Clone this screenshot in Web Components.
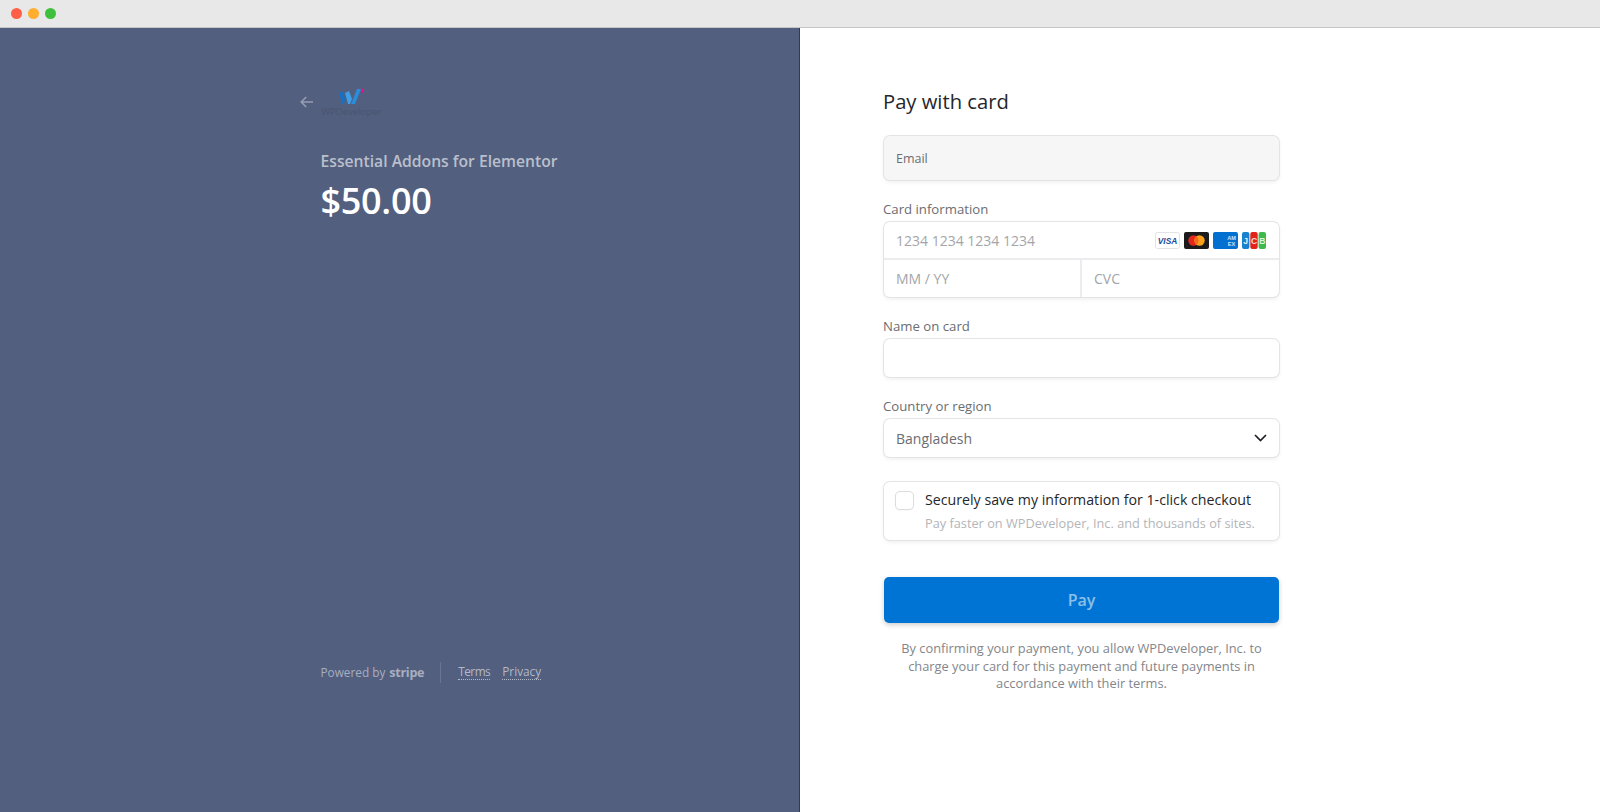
<!DOCTYPE html>
<html lang="en">
<head>
<meta charset="utf-8">
<title>Pay with card</title>
<style>
  html, body { margin: 0; height: 100%; }
  body { font-family: "Open Sans", "Noto Sans", "Liberation Sans", sans-serif; overflow: hidden; }
</style>
</head>
<body>
<checkout-window>
  <order-summary slot="left" name="Essential Addons for Elementor" price="$50.00"></order-summary>
  <pay-form slot="right"></pay-form>
</checkout-window>

<script>
// ventana con barra de titulo y dos columnas
class CheckoutWindow extends HTMLElement {
  constructor() {
    super();
    this.attachShadow({ mode: 'open' });
  }
  connectedCallback() {
    this.shadowRoot.innerHTML = `
    <style>
      :host { display: flex; flex-direction: column; height: 812px; background: #fff; }
      .bar { height: 28px; box-sizing: border-box; background: #e8e8e8; border-bottom: 1px solid #c4c5c9; display: flex; align-items: center; gap: 6px; padding: 0 0 0 11px; flex: none; }
      .dot { width: 11px; height: 11px; border-radius: 50%; }
      .split { flex: 1; display: grid; grid-template-columns: 800px 800px; min-height: 0; }
      .left { background: #525f7f; border-right: 1px solid #2f3a56; box-sizing: border-box; display: flex; min-height: 0; }
      .right { background: #fff; display: flex; }
    </style>
    <div class="bar">
      <span class="dot" style="background:#ff5f47"></span>
      <span class="dot" style="background:#ffae2e"></span>
      <span class="dot" style="background:#3fc03c"></span>
    </div>
    <div class="split">
      <div class="left"><slot name="left"></slot></div>
      <div class="right"><slot name="right"></slot></div>
    </div>`;
  }
}

class OrderSummary extends HTMLElement {
  constructor() {
    super();
    this.attachShadow({ mode: 'open' });
  }
  connectedCallback() {
    const name = this.getAttribute('name') ?? '';
    const price = this.getAttribute('price') ?? '';
    this.shadowRoot.innerHTML = `
    <style>
      :host { display: flex; flex-direction: column; flex: 1; box-sizing: border-box; padding: 57px 0 129px 300px; }
      .head { display: flex; align-items: center; gap: 8px; height: 33px; }
      .back { width: 13px; height: 12px; flex: none; }
      .logo { display: flex; flex-direction: column; align-items: center; width: 61px; }
      .logo svg { display: block; margin-bottom: 2px; }
      .logo span { font-size: 9.6px; line-height: 10px; color: #4a5470; white-space: nowrap; }
      .info { padding-left: 20.5px; margin-top: 33px; }
      .name { font-size: 15.7px; line-height: 20px; font-weight: 600; color: #babfcc; white-space: nowrap; }
      .price { font-size: 36px; line-height: 44px; font-weight: 600; color: #fff; margin-top: 8px; letter-spacing: -.3px; }
      .foot { margin-top: auto; padding-left: 20.5px; display: flex; align-items: center; height: 22px; font-size: 11.8px; color: #a8aebf; }
      .foot b { font-size: 12.6px; font-weight: 700; margin-left: 4px; letter-spacing: -.3px; color: #a8aebf; }
      .sep { width: 1px; height: 21px; background: #6a7592; margin: 0 17px 0 16px; }
      a { color: #b2b8c7; text-decoration: none; border-bottom: 1px dotted #b2b8c7; line-height: 15px; margin-right: 12px; }
      a.terms { letter-spacing: -.5px; }
    </style>
    <div class="head">
      <svg class="back" viewBox="0 0 13 12" fill="none" stroke="#979fb4" stroke-width="1.5"><path d="M13 6H1.2M6.2 1 1.2 6l5 5"/></svg>
      <div class="logo">
        <svg width="26" height="18" viewBox="0 0 26 18">
          <path d="M0 5h4l2 7-1 5H3z" fill="#1670c4"/>
          <path d="M6 6l4-2 3 8-2 5H9z" fill="#3f9ee6"/>
          <path d="M12 17L18 2h4l-6 15z" fill="#2b8cdc"/>
          <path d="M22.5 2L25 1l-.6 4-2.6 2z" fill="#e0148c"/>
        </svg>
        <span>WPDeveloper</span>
      </div>
    </div>
    <div class="info">
      <div class="name">${name}</div>
      <div class="price">${price}</div>
    </div>
    <div class="foot">
      <span>Powered by</span><b>stripe</b>
      <span class="sep"></span>
      <a class="terms">Terms</a><a>Privacy</a>
    </div>`;
  }
}

class FieldLabel extends HTMLElement {
  constructor() {
    super();
    this.attachShadow({ mode: 'open' });
  }
  connectedCallback() {
    this.shadowRoot.innerHTML = `
    <style>
      :host { display: block; font-size: 13.2px; line-height: 17px; color: #6b6d72; margin-bottom: 4px; }
    </style>
    <slot></slot>`;
  }
}

// caja de campo con el borde y la sombra de stripe
class FieldBox extends HTMLElement {
  constructor() {
    super();
    this.attachShadow({ mode: 'open' });
  }
  connectedCallback() {
    this.shadowRoot.innerHTML = `
    <style>
      :host { display: flex; align-items: center; box-sizing: border-box; height: var(--h, 38px); padding: 0 12px; background: var(--bg, #fff); color: var(--c, #6b6d72); border-radius: 6px; box-shadow: 0 0 0 1px #e4e4e6, 0 2px 4px rgba(0,0,0,.08); font-size: 14px; }
      ::slotted(*) { flex: none; }
    </style>
    <slot></slot>`;
  }
}

class CardBrands extends HTMLElement {
  constructor() {
    super();
    this.attachShadow({ mode: 'open' });
  }
  connectedCallback() {
    this.shadowRoot.innerHTML = `
    <style>
      :host { display: flex; gap: 4px; align-items: center; }
      svg { display: block; }
      text { font-family: "Liberation Sans", sans-serif; }
    </style>
    <svg width="25" height="17" viewBox="0 0 25 17">
      <rect x=".5" y=".5" width="24" height="16" rx="2" fill="#fff" stroke="#e3e3e6"/>
      <text x="12.5" y="11.8" text-anchor="middle" font-size="8.4" font-weight="700" font-style="italic" fill="#1a4a9c">VISA</text>
    </svg>
    <svg width="25" height="17" viewBox="0 0 25 17">
      <rect width="25" height="17" rx="2" fill="#1b1b1b"/>
      <circle cx="9.5" cy="8.5" r="5.2" fill="#e5261f"/>
      <circle cx="15.5" cy="8.5" r="5.2" fill="#f9a11b"/>
      <path d="M12.5 4.3a5.2 5.2 0 0 1 0 8.4 5.2 5.2 0 0 1 0-8.4z" fill="#f26b1d"/>
    </svg>
    <svg width="25" height="17" viewBox="0 0 25 17">
      <rect width="25" height="17" rx="2" fill="#0170d0"/>
      <text x="18.5" y="7.5" text-anchor="middle" font-size="5.6" font-weight="700" fill="#cfe4f7">AM</text>
      <text x="18.5" y="14" text-anchor="middle" font-size="5.6" font-weight="700" fill="#cfe4f7">EX</text>
    </svg>
    <svg width="24" height="17" viewBox="0 0 24 17">
      <rect x="0" y="0" width="7.4" height="17" rx="2" fill="#1782d0"/>
      <rect x="8.3" y="0" width="7.4" height="17" rx="2" fill="#e2231a"/>
      <rect x="16.6" y="0" width="7.4" height="17" rx="2" fill="#3fb94b"/>
      <text x="3.7" y="12.2" text-anchor="middle" font-size="8.6" font-weight="700" fill="#e6f2fb">J</text>
      <text x="12" y="12.2" text-anchor="middle" font-size="8.6" font-weight="700" fill="#f8d8d5">C</text>
      <text x="20.3" y="12.2" text-anchor="middle" font-size="8.6" font-weight="700" fill="#dcf3de">B</text>
    </svg>`;
  }
}

class CardFields extends HTMLElement {
  constructor() {
    super();
    this.attachShadow({ mode: 'open' });
  }
  connectedCallback() {
    this.shadowRoot.innerHTML = `
    <style>
      :host { display: block; height: 75px; box-sizing: border-box; border-radius: 6px; background: #fff; box-shadow: 0 0 0 1px #e4e4e6, 0 2px 4px rgba(0,0,0,.08); font-size: 14px; color: #a3a5a9; }
      .num { height: 38px; box-sizing: border-box; display: flex; align-items: center; justify-content: space-between; padding: 1px 13px 0 12px; border-bottom: 2px solid #ececee; }
      .row { height: 37px; display: grid; grid-template-columns: 196px 1fr; }
      .row div { display: flex; align-items: center; padding-left: 12px; }
      .row div + div { border-left: 2px solid #ececee; padding-left: 12px; }
      card-brands { margin-top: -1px; }
    </style>
    <div class="num"><span>1234 1234 1234 1234</span><card-brands></card-brands></div>
    <div class="row"><div>MM / YY</div><div>CVC</div></div>`;
  }
}

class SaveInfo extends HTMLElement {
  constructor() {
    super();
    this.attachShadow({ mode: 'open' });
  }
  connectedCallback() {
    this.shadowRoot.innerHTML = `
    <style>
      :host { display: flex; gap: 12px; box-sizing: border-box; height: 58px; padding: 10px 12px; border-radius: 6px; background: #fff; box-shadow: 0 0 0 1px #e4e4e6, 0 2px 4px rgba(0,0,0,.08); }
      .box { width: 17px; height: 17px; flex: none; box-sizing: border-box; border-radius: 4px; background: #fff; box-shadow: 0 0 0 1px #dcdcdf, 0 1px 2px rgba(0,0,0,.1); }
      .txt { margin-top: -1px; }
      .t1 { font-size: 14.2px; line-height: 18px; color: #24262b; white-space: nowrap; }
      .t2 { font-size: 12.75px; line-height: 17px; color: #b3b5b9; margin-top: 6px; white-space: nowrap; }
    </style>
    <span class="box"></span>
    <div class="txt">
      <div class="t1">Securely save my information for 1-click checkout</div>
      <div class="t2">Pay faster on WPDeveloper, Inc. and thousands of sites.</div>
    </div>`;
  }
}

class PayForm extends HTMLElement {
  constructor() {
    super();
    this.attachShadow({ mode: 'open' });
  }
  connectedCallback() {
    this.shadowRoot.innerHTML = `
    <style>
      :host { display: block; width: 395px; margin-left: 84px; padding-top: 59px; }
      h1 { font-size: 20.2px; line-height: 28px; font-weight: 500; color: #24262b; margin: 0 0 21px -1px; }
      .email { --h: 44px; --bg: #f6f6f6; font-size: 12.5px; margin-bottom: 21px; font-weight: 500; }
      .gap { margin-bottom: 21px; }
      field-label { margin-left: -1px; }
      .country { --h: 38px; justify-content: space-between; margin-bottom: 25px; }
      .chev { width: 13px; height: 8px; }
      button { display: block; width: 100%; height: 46px; margin-top: 37px; border: 0; border-radius: 5px; background: #0074d4; color: #8dbfe9; font: 600 16px "Open Sans", sans-serif; box-shadow: 0 2px 5px rgba(0,0,0,.2); }
      p { margin: 17px 0 0; padding: 0 6px; text-align: center; font-size: 12.85px; line-height: 17.5px; color: #84868b; }
    </style>
    <h1>Pay with card</h1>
    <field-box class="email">Email</field-box>
    <field-label>Card information</field-label>
    <card-fields class="gap"></card-fields>
    <field-label>Name on card</field-label>
    <field-box class="gap"></field-box>
    <field-label>Country or region</field-label>
    <field-box class="country"><span>Bangladesh</span><svg class="chev" viewBox="0 0 13 8" fill="none" stroke="#1d1f24" stroke-width="1.7"><path d="M1 1l5.5 5.5L12 1"/></svg></field-box>
    <save-info></save-info>
    <button type="button">Pay</button>
    <p>By confirming your payment, you allow WPDeveloper, Inc. to charge your card for this payment and future payments in accordance with their terms.</p>`;
  }
}

customElements.define('field-label', FieldLabel);
customElements.define('field-box', FieldBox);
customElements.define('card-brands', CardBrands);
customElements.define('card-fields', CardFields);
customElements.define('save-info', SaveInfo);
customElements.define('pay-form', PayForm);
customElements.define('order-summary', OrderSummary);
customElements.define('checkout-window', CheckoutWindow);
</script>
</body>
</html>
